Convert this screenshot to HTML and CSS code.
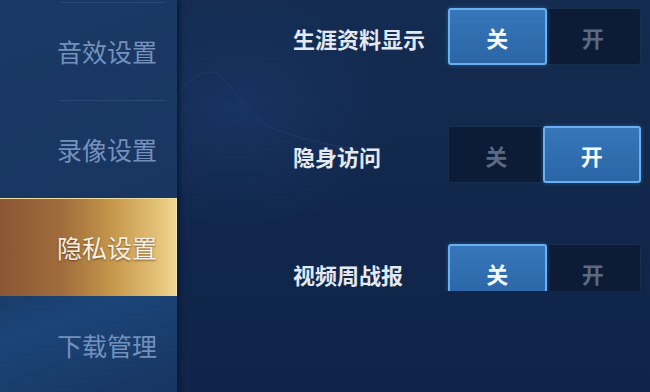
FILE: index.html
```html
<!DOCTYPE html>
<html lang="zh">
    <head>
        <meta charset="UTF-8" />
        <meta name="viewport" content="width=device-width, initial-scale=1.0" />
        <title>隐私设置</title>
        <link rel="stylesheet" href="styles.css">
    </head>
    <body>
        <div class="screen">
            <nav class="sidebar">
                <div class="menu-item">音效设置</div>
                <div class="menu-item">录像设置</div>
                <div class="menu-item active">隐私设置</div>
                <div class="menu-item">下载管理</div>
            </nav>

            <main class="content">
                <svg class="backdrop" width="300" height="300" viewBox="0 0 300 300">
                    <path d="M0 95 C 12 80, 22 72, 32 72 C 48 72, 60 100, 80 118 C 100 134, 130 140, 180 150" fill="none" stroke="#2b4c7a" stroke-width="1" opacity="0.45" />
                </svg>
                <div class="list">
                    <div class="row">
                        <span class="row-label">生涯资料显示</span>
                        <div class="toggle">
                            <button class="option on">关</button>
                            <button class="option">开</button>
                        </div>
                    </div>
                    <div class="row">
                        <span class="row-label">隐身访问</span>
                        <div class="toggle">
                            <button class="option">关</button>
                            <button class="option on">开</button>
                        </div>
                    </div>
                    <div class="row">
                        <span class="row-label">视频周战报</span>
                        <div class="toggle">
                            <button class="option on">关</button>
                            <button class="option">开</button>
                        </div>
                    </div>
                </div>
            </main>
        </div>

        <script>
            document.querySelectorAll('.toggle').forEach((toggle) => {
                toggle.addEventListener('click', (event) => {
                    const option = event.target.closest('.option');
                    if (!option) return;
                    toggle.querySelectorAll('.option').forEach((o) => o.classList.remove('on'));
                    option.classList.add('on');
                });
            });
        </script>
    </body>
</html>
```

FILE: styles.css
```css
* {
    margin: 0;
    padding: 0;
    box-sizing: border-box;
}

body {
    font-family: "Noto Sans CJK SC", "Noto Sans", sans-serif;
    width: 650px;
    height: 392px;
    overflow: hidden;
    background-color: #11264a;
}

.screen {
    display: flex;
    height: 392px;
}

.sidebar {
    width: 177px;
    flex-shrink: 0;
    padding-top: 2px;
    background: linear-gradient(160deg, #1a3964 0%, #183660 55%, #1b4477 75%, #173561 100%);
    box-shadow: 3px 0 4px #0b1c38;
    position: relative;
    z-index: 1;
}

.menu-item {
    position: relative;
    height: 98px;
    display: flex;
    align-items: center;
    justify-content: flex-end;
    padding-right: 20px;
    font-size: 25px;
    color: #7491bc;
}

/* thin divider above each item */
.menu-item::before {
    content: "";
    position: absolute;
    top: 0;
    left: 60px;
    right: 12px;
    height: 1px;
    background-color: #2a4a76;
}

.menu-item.active::before,
.menu-item.active + .menu-item::before {
    display: none;
}

.menu-item.active {
    color: #f6f0e4;
    text-shadow: 0 1px 2px rgba(60, 30, 10, 0.6);
    background: linear-gradient(90deg, #8a5634 0%, #a16c3c 35%, #c79a4c 65%, #e7c67e 92%, #f0d896 100%);
    box-shadow: inset 0 1px 0 #f3dca0, inset -1px 0 0 #f6e4b0;
}

.content {
    flex: 1;
    position: relative;
    padding-left: 116px;
    background: radial-gradient(ellipse 160px 120px at 60px 110px, #173360 0%, rgba(23, 51, 96, 0) 100%),
        linear-gradient(180deg, #142c51 0%, #11264a 60%, #10244a 100%);
}

.backdrop {
    position: absolute;
    left: 0;
    top: 0;
}

.list {
    position: relative;
    height: 291px;
    overflow: hidden;
    padding-top: 8px;
    display: flex;
    flex-direction: column;
    gap: 61px;
}

.row {
    display: flex;
    align-items: center;
    flex-shrink: 0;
    height: 57px;
}

.row-label {
    width: 155px;
    font-size: 22px;
    font-weight: bold;
    color: #e3e9f2;
    padding-top: 2px;
}

.toggle {
    display: flex;
    width: 193px;
    height: 57px;
    background-color: #0c1c37;
    border: 1px solid #1a2e4e;
    border-radius: 3px;
}

.option {
    flex: 1;
    border: none;
    background: none;
    font-family: inherit;
    font-size: 22px;
    font-weight: bold;
    color: #5a6a82;
    cursor: pointer;
}

.option.on {
    margin: -1px;
    color: #f4f8fc;
    background: linear-gradient(180deg, #3577ba 0%, #2b65a6 100%);
    border: 2px solid #69b0f0;
    border-radius: 3px;
    box-shadow: 0 0 4px rgba(90, 160, 230, 0.4);
}
```
